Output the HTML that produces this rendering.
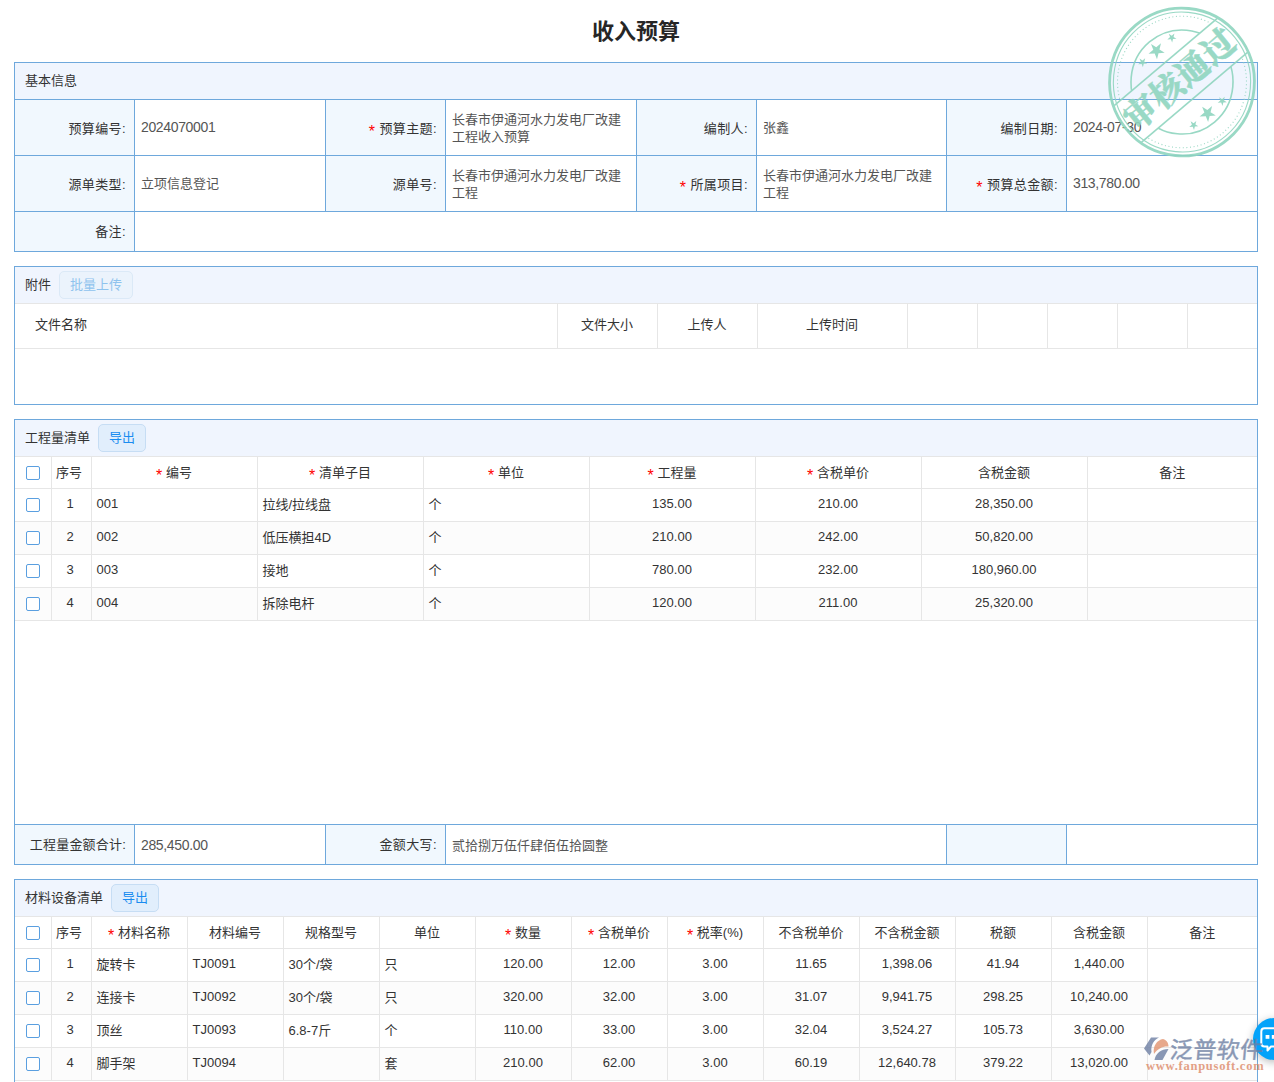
<!DOCTYPE html>
<html lang="zh-CN">
<head>
<meta charset="utf-8">
<title>收入预算</title>
<style>
*{box-sizing:border-box;margin:0;padding:0}
html,body{width:1274px;height:1082px;overflow:hidden;background:#fff}
body{position:relative;font-family:"Liberation Sans","Noto Sans CJK SC",sans-serif;font-size:13px;color:#333}
.title{position:absolute;left:-1px;top:15px;width:1274px;text-align:center;font-size:22px;font-weight:bold;line-height:34px;color:#262626;letter-spacing:0}
.panel{position:absolute;left:14px;width:1244px;border:1px solid #6ea8dc;background:#fff;overflow:hidden}
.phead{height:36px;line-height:35px;background:#f0f5fe;padding-left:10px;color:#333;white-space:nowrap}
.btn{display:inline-block;height:28px;line-height:25px;padding:0 10px;border:1px solid #c6ddf4;border-radius:5px;background:#e1eefc;color:#1a8cf0;margin-left:4px;vertical-align:middle;position:relative;top:-1px}
.btn.dis{color:#8fc3ee;background:#ebf3fc;border-color:#dbe9f7}
table{border-collapse:collapse;table-layout:fixed}
/* form table */
.form{position:absolute;left:-1px;width:1244px}
.form td{border:1px solid #6ea8dc;vertical-align:middle;font-size:13px;line-height:17px}
.form td.l{background:#f1f8fe;text-align:right;padding-right:8px;color:#333;white-space:nowrap;letter-spacing:.4px;padding-top:2px}
.form td.v{background:#fff;padding-left:6px;padding-right:6px;color:#555}
.req{color:#f00;font-family:"Liberation Sans",sans-serif;font-size:16px;line-height:0;position:relative;top:4px}
/* grid table */
.grid{position:absolute;left:0;width:1242px}
.grid td,.grid th{border-right:1px solid #e6e6e6;border-bottom:1px solid #e6e6e6;font-weight:normal;font-size:13px;color:#333;overflow:hidden;white-space:nowrap;vertical-align:middle}
.grid td:last-child,.grid th:last-child{border-right:none}
.grid th{background:#fff;text-align:center}
.grid td{padding:0 5px}
.grid td.c{text-align:center}
.grid tr.alt td{background:#fcfcfc}
.cb{display:block;width:14px;height:14px;border:1px solid #5a9fe0;border-radius:2px;background:#fff;margin:0 0 0 11px;position:relative;top:1px}
.phead.g{height:37px;border-bottom:1px solid #e6e6e6}
.n{font-size:14px;letter-spacing:-.35px}
.grid td,.grid th{padding-bottom:2px}
.grid th{padding-right:0}
.grid td.k,.grid th.k{padding:0}
.grid td.k .cb{top:0}
.grid th.s{padding-right:4px}
.grid td.s{padding-right:7px}
.grid.att th{padding-bottom:4px}
</style>
</head>
<body>
<div class="title">收入预算</div>

<!-- panel 1 -->
<div class="panel" id="p1" style="top:62px;height:190px">
  <div class="phead">基本信息</div>
  <table class="form" style="top:36px">
    <colgroup><col style="width:120px"><col style="width:191px"><col style="width:120px"><col style="width:191px"><col style="width:120px"><col style="width:190px"><col style="width:120px"><col style="width:192px"></colgroup>
    <tr style="height:56px">
      <td class="l">预算编号:</td><td class="v"><span class="n">2024070001</span></td>
      <td class="l"><span class="req">*</span> 预算主题:</td><td class="v">长春市伊通河水力发电厂改建工程收入预算</td>
      <td class="l">编制人:</td><td class="v">张鑫</td>
      <td class="l">编制日期:</td><td class="v"><span class="n">2024-07-30</span></td>
    </tr>
    <tr style="height:56px">
      <td class="l">源单类型:</td><td class="v">立项信息登记</td>
      <td class="l">源单号:</td><td class="v">长春市伊通河水力发电厂改建工程</td>
      <td class="l"><span class="req">*</span> 所属项目:</td><td class="v">长春市伊通河水力发电厂改建工程</td>
      <td class="l"><span class="req">*</span> 预算总金额:</td><td class="v"><span class="n">313,780.00</span></td>
    </tr>
    <tr style="height:41px">
      <td class="l" style="padding-top:0;padding-bottom:2px">备注:</td><td class="v" colspan="7"></td>
    </tr>
  </table>
</div>

<!-- panel 2 -->
<div class="panel" id="p2" style="top:266px;height:139px">
  <div class="phead g">附件<span class="btn dis" style="margin-left:8px">批量上传</span></div>
  <table class="grid att" style="top:37px">
    <colgroup><col style="width:542px"><col style="width:100px"><col style="width:100px"><col style="width:150px"><col style="width:70px"><col style="width:70px"><col style="width:70px"><col style="width:70px"><col style="width:70px"></colgroup>
    <tr style="height:44px">
      <th style="text-align:left;padding-left:20px">文件名称</th><th>文件大小</th><th>上传人</th><th>上传时间</th><th></th><th></th><th></th><th></th><th></th>
    </tr>
  </table>
</div>

<!-- panel 3 -->
<div class="panel" id="p3" style="top:419px;height:446px">
  <div class="phead g">工程量清单<span class="btn" style="margin-left:8px">导出</span></div>
  <table class="grid" style="top:37px">
    <colgroup><col style="width:36px"><col style="width:40px"><col style="width:166px"><col style="width:166px"><col style="width:166px"><col style="width:166px"><col style="width:166px"><col style="width:166px"><col style="width:170px"></colgroup>
    <tr style="height:31px">
      <th class="k"><span class="cb"></span></th><th class="s">序号</th><th><span class="req">*</span> 编号</th><th><span class="req">*</span> 清单子目</th><th><span class="req">*</span> 单位</th><th><span class="req">*</span> 工程量</th><th><span class="req">*</span> 含税单价</th><th>含税金额</th><th>备注</th>
    </tr>
    <tr style="height:33px"><td class="k"><span class="cb"></span></td><td class="c s">1</td><td>001</td><td>拉线/拉线盘</td><td>个</td><td class="c">135.00</td><td class="c">210.00</td><td class="c">28,350.00</td><td></td></tr>
    <tr style="height:33px" class="alt"><td class="k"><span class="cb"></span></td><td class="c s">2</td><td>002</td><td>低压横担4D</td><td>个</td><td class="c">210.00</td><td class="c">242.00</td><td class="c">50,820.00</td><td></td></tr>
    <tr style="height:33px"><td class="k"><span class="cb"></span></td><td class="c s">3</td><td>003</td><td>接地</td><td>个</td><td class="c">780.00</td><td class="c">232.00</td><td class="c">180,960.00</td><td></td></tr>
    <tr style="height:33px" class="alt"><td class="k"><span class="cb"></span></td><td class="c s">4</td><td>004</td><td>拆除电杆</td><td>个</td><td class="c">120.00</td><td class="c">211.00</td><td class="c">25,320.00</td><td></td></tr>
  </table>
  <table class="form" style="top:404px">
    <colgroup><col style="width:120px"><col style="width:191px"><col style="width:120px"><col style="width:501px"><col style="width:120px"><col style="width:192px"></colgroup>
    <tr style="height:41px">
      <td class="l" style="padding-top:0;padding-bottom:2px;letter-spacing:.2px">工程量金额合计:</td><td class="v"><span class="n">285,450.00</span></td>
      <td class="l" style="padding-top:0;padding-bottom:2px">金额大写:</td><td class="v">贰拾捌万伍仟肆佰伍拾圆整</td>
      <td class="l"></td><td class="v"></td>
    </tr>
  </table>
</div>

<!-- panel 4 -->
<div class="panel" id="p4" style="top:879px;height:220px">
  <div class="phead g">材料设备清单<span class="btn" style="margin-left:8px">导出</span></div>
  <table class="grid" style="top:37px">
    <colgroup><col style="width:36px"><col style="width:40px"><col style="width:96px"><col style="width:96px"><col style="width:96px"><col style="width:96px"><col style="width:96px"><col style="width:96px"><col style="width:96px"><col style="width:96px"><col style="width:96px"><col style="width:96px"><col style="width:96px"><col style="width:110px"></colgroup>
    <tr style="height:31px">
      <th class="k"><span class="cb"></span></th><th class="s">序号</th><th><span class="req">*</span> 材料名称</th><th>材料编号</th><th>规格型号</th><th>单位</th><th><span class="req">*</span> 数量</th><th><span class="req">*</span> 含税单价</th><th><span class="req">*</span> 税率(%)</th><th>不含税单价</th><th>不含税金额</th><th>税额</th><th>含税金额</th><th>备注</th>
    </tr>
    <tr style="height:33px"><td class="k"><span class="cb"></span></td><td class="c s">1</td><td>旋转卡</td><td>TJ0091</td><td>30个/袋</td><td>只</td><td class="c">120.00</td><td class="c">12.00</td><td class="c">3.00</td><td class="c">11.65</td><td class="c">1,398.06</td><td class="c">41.94</td><td class="c">1,440.00</td><td></td></tr>
    <tr style="height:33px" class="alt"><td class="k"><span class="cb"></span></td><td class="c s">2</td><td>连接卡</td><td>TJ0092</td><td>30个/袋</td><td>只</td><td class="c">320.00</td><td class="c">32.00</td><td class="c">3.00</td><td class="c">31.07</td><td class="c">9,941.75</td><td class="c">298.25</td><td class="c">10,240.00</td><td></td></tr>
    <tr style="height:33px"><td class="k"><span class="cb"></span></td><td class="c s">3</td><td>顶丝</td><td>TJ0093</td><td>6.8-7斤</td><td>个</td><td class="c">110.00</td><td class="c">33.00</td><td class="c">3.00</td><td class="c">32.04</td><td class="c">3,524.27</td><td class="c">105.73</td><td class="c">3,630.00</td><td></td></tr>
    <tr style="height:33px" class="alt"><td class="k"><span class="cb"></span></td><td class="c s">4</td><td>脚手架</td><td>TJ0094</td><td></td><td>套</td><td class="c">210.00</td><td class="c">62.00</td><td class="c">3.00</td><td class="c">60.19</td><td class="c">12,640.78</td><td class="c">379.22</td><td class="c">13,020.00</td><td></td></tr>
  </table>
</div>

<!-- chat button -->
<div id="chat" style="position:absolute;left:1253px;top:1018px;width:42px;height:42px;border-radius:50%;background:#04a3fa;box-shadow:0 2px 8px rgba(0,0,0,.28)">
  <svg style="position:absolute;left:7px;top:9px" width="24" height="26" viewBox="0 0 24 26">
    <path d="M4.5,1.2 H24 V19.5 H11 L7.5,23.5 V19.5 H4.5 C2.7,19.5 1.3,18.1 1.3,16.3 V4.4 C1.3,2.6 2.7,1.2 4.5,1.2 Z" fill="#04a3fa" stroke="#fff" stroke-width="2" stroke-linejoin="round"/>
    <rect x="5.6" y="8" width="3.8" height="3.8" fill="#fff"/><rect x="11.8" y="8" width="3.8" height="3.8" fill="#fff"/><rect x="18" y="8" width="3.8" height="3.8" fill="#fff"/>
  </svg>
</div>

<!-- watermark logo -->
<div id="logo" style="position:absolute;left:1143px;top:1032px;width:131px;height:46px;opacity:.8;pointer-events:none">
  <svg style="position:absolute;left:0;top:5px" width="28" height="24" viewBox="0 0 28 24">
    <path d="M1,11.5 L8,0.5 L16,0.5 C11,3 7.5,8 8.5,15 L6.5,18.5 Z" fill="#6d7fa3"/>
    <path d="M11,17 C9.5,9 14,3 20,2 C24,3 25.5,6.5 25.5,9.5 C20,9 14.5,11.5 11,17 Z" fill="#e2936f"/>
    <path d="M11.5,23 C12.5,16.5 18,12 25.5,12 L19.5,23 Z" fill="#6d7fa3"/>
  </svg>
  <div style="position:absolute;left:27px;top:3px;font-size:23px;line-height:30px;color:#6d7fa3;white-space:nowrap;letter-spacing:.4px;-webkit-text-stroke:.45px #6d7fa3;transform:skewX(-5deg);font-family:'Liberation Sans','Noto Sans CJK SC',sans-serif">泛普软件</div>
  <div style="position:absolute;left:3px;top:25.5px;font-size:12.5px;line-height:16px;font-weight:bold;color:#dd8a68;white-space:nowrap;letter-spacing:.75px;font-family:'Liberation Serif',serif">www.fanpusoft.com</div>
</div>
<!-- stamp -->
<svg id="stamp" style="position:absolute;left:1102px;top:2px;opacity:.9" width="160" height="160" viewBox="-80 -80 160 160">
  <defs>
    <clipPath id="offband"><rect x="-80" y="-80" width="160" height="54.5"/><rect x="-80" y="19.5" width="160" height="60.5"/></clipPath>
  </defs>
  <g transform="scale(1,1.02) rotate(-39.7)" fill="none" stroke="#8fd5bf">
    <circle r="72.4" stroke-width="2.8"/>
    <circle r="68.6" stroke-width="1.1"/>
    <g clip-path="url(#offband)">
      <circle r="64.5" stroke-width="1.1" stroke-dasharray="1 2.6"/>
      <circle r="51" stroke-width="1.6"/>
    </g>
    <line x1="-67" y1="-25.5" x2="67" y2="-25.5" stroke-width="1.6"/>
    <line x1="-69" y1="19.5" x2="69" y2="19.5" stroke-width="1.6"/>
    <g fill="#8fd5bf" stroke="none"><polygon points="-18.00,-44.80 -16.92,-41.48 -13.43,-41.48 -16.26,-39.43 -15.18,-36.12 -18.00,-38.17 -20.82,-36.12 -19.74,-39.43 -22.57,-41.48 -19.08,-41.48"/><polygon points="0.00,-48.50 1.91,-42.63 8.08,-42.63 3.09,-39.00 5.00,-33.12 0.00,-36.75 -5.00,-33.12 -3.09,-39.00 -8.08,-42.63 -1.91,-42.63"/><polygon points="20.00,-44.80 21.08,-41.48 24.57,-41.48 21.74,-39.43 22.82,-36.12 20.00,-38.17 17.18,-36.12 18.26,-39.43 15.43,-41.48 18.92,-41.48"/><polygon points="-18.00,35.20 -16.92,38.52 -13.43,38.52 -16.26,40.57 -15.18,43.88 -18.00,41.83 -20.82,43.88 -19.74,40.57 -22.57,38.52 -19.08,38.52"/><polygon points="0.00,31.50 1.91,37.37 8.08,37.37 3.09,41.00 5.00,46.88 0.00,43.25 -5.00,46.88 -3.09,41.00 -8.08,37.37 -1.91,37.37"/><polygon points="19.00,35.20 20.08,38.52 23.57,38.52 20.74,40.57 21.82,43.88 19.00,41.83 16.18,43.88 17.26,40.57 14.43,38.52 17.92,38.52"/></g>
    <text x="0" y="8.5" text-anchor="middle" fill="#8fd5bf" stroke="#8fd5bf" stroke-width="0.45" stroke-linejoin="round" font-family="'Liberation Serif','Noto Serif CJK SC',serif" font-weight="900" font-size="33" letter-spacing="0.5">审核通过</text>
  </g>
</svg>

</body>
</html>
